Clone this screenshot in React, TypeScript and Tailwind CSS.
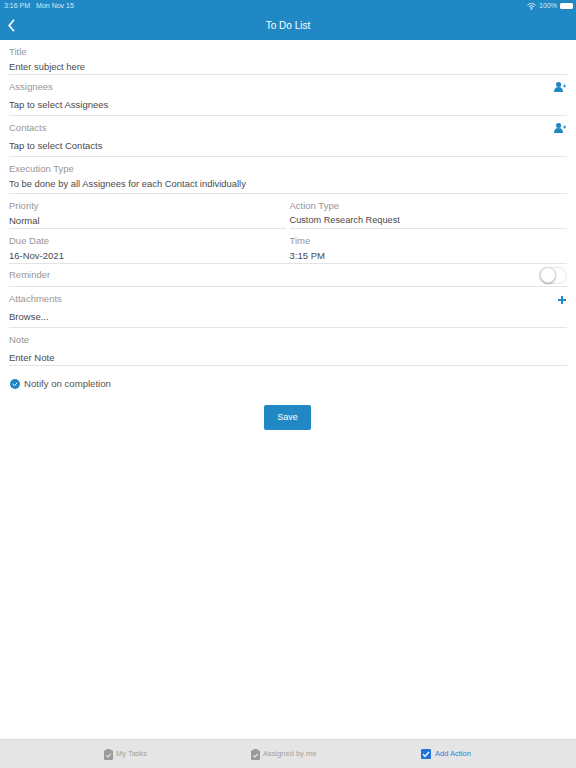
import React from "react";

const FONT = "font-['Liberation_Sans',sans-serif]";

function AddPerson() {
  return (
    <svg width="12" height="10" viewBox="0 0 12 10" fill="#2088c4">
      <ellipse cx="4.6" cy="2.5" rx="2.6" ry="2.5" />
      <path d="M0 10 C0 6.6 1.8 5 4.6 5 C7.4 5 9 6.6 9 10 Z" />
      <path d="M9.2 3.4h1V2.4h1v1h.8v1h-.8v1h-1v-1h-1z" />
    </svg>
  );
}

function Clipboard({ color }: { color: string }) {
  return (
    <svg width="9" height="11" viewBox="0 0 9 11">
      <rect x="0" y="1.2" width="9" height="9.8" rx="1" fill={color} />
      <rect x="2.5" y="0" width="4" height="2.4" rx="0.6" fill={color} />
      <path d="M2.3 6.4l1.6 1.6 3-3" stroke="#e5e5e5" strokeWidth="1.1" fill="none" />
    </svg>
  );
}

function Field({
  label,
  value,
  h,
  icon,
  gap,
  size = "text-[9.5px]",
}: {
  label: string;
  value: string;
  h: string;
  icon?: React.ReactNode;
  gap: string;
  size?: string;
}) {
  return (
    <div className={`${h} flex flex-col border-b border-[#e4e4e4] pt-[5px]`}>
      <div className="flex items-center justify-between pr-[1px] h-[13px]">
        <span className="text-[9.5px] leading-[13px] text-[#969696]">{label}</span>
        {icon}
      </div>
      <span className={`${gap} ${size} leading-[13px] text-[#4a4a4a]`}>{value}</span>
    </div>
  );
}

export default function App() {
  return (
    <div className={`${FONT} w-[576px] h-[768px] bg-white flex flex-col overflow-hidden`}>
      <div className="h-[40px] bg-[#2088c4] flex flex-col shrink-0 text-white">
        <div className="h-[12px] flex items-center justify-between pl-[4px] pr-[3px] text-[7px] text-[#d7ebf6]">
          <div className="flex gap-[6px]">
            <span>3:16 PM</span>
            <span>Mon Nov 15</span>
          </div>
          <div className="flex items-center gap-[3px]">
            <svg width="9" height="7" viewBox="0 0 9 7" fill="none" stroke="#e8f3fa" strokeWidth="1">
              <path d="M0.4 2.3C2.7 0 6.3 0 8.6 2.3" />
              <path d="M1.9 3.8C3.3 2.5 5.7 2.5 7.1 3.8" />
              <path d="M3.3 5.2C4 4.6 5 4.6 5.7 5.2" />
              <circle cx="4.5" cy="6.2" r="0.4" />
            </svg>
            <span>100%</span>
            <div className="w-[13px] h-[6px] rounded-[1.5px] bg-white" />
          </div>
        </div>
        <div className="relative flex-1 flex items-center justify-center">
          <svg className="absolute left-[8px] top-[7px]" width="7" height="13" viewBox="0 0 7 13" fill="none">
            <path d="M6 0.8L1.2 6.5L6 12.2" stroke="white" strokeWidth="1.7" />
          </svg>
          <span className="text-[10px] font-normal -mt-[2px]">To Do List</span>
        </div>
      </div>

      <div className="flex flex-col mx-[9px] w-[558px]">
        <Field label="Title" value="Enter subject here" h="h-[35px]" gap="mt-[2px]" size="text-[9.4px]" />
        <Field label="Assignees" value="Tap to select Assignees" h="h-[41px]" gap="mt-[5px]" icon={<AddPerson />} />
        <Field label="Contacts" value="Tap to select Contacts" h="h-[41px]" gap="mt-[5px]" icon={<AddPerson />} />
        <Field
          label="Execution Type"
          value="To be done by all Assignees for each Contact individually"
          h="h-[37px]"
          gap="mt-[2px]"
          size="text-[9.42px]"
        />
        <div className="grid grid-cols-[277px_277.5px] gap-x-[3.5px]">
          <Field label="Priority" value="Normal" h="h-[35px]" gap="mt-[2px]" />
          <Field label="Action Type" value="Custom Research Request" h="h-[35px]" gap="mt-[2px]" size="text-[9.2px]" />
        </div>
        <div className="grid grid-cols-[277px_281px] h-[35px] border-b border-[#e4e4e4]">
          <div className="pt-[5px] flex flex-col">
            <span className="text-[9.5px] leading-[13px] text-[#969696]">Due Date</span>
            <span className="mt-[2px] text-[9.5px] leading-[13px] text-[#4a4a4a]">16-Nov-2021</span>
          </div>
          <div className="pl-[3.5px] pt-[5px] flex flex-col">
            <span className="text-[9.5px] leading-[13px] text-[#969696]">Time</span>
            <span className="mt-[2px] text-[9.5px] leading-[13px] text-[#4a4a4a]">3:15 PM</span>
          </div>
        </div>
        <div className="h-[23px] flex items-center justify-between border-b border-[#e4e4e4]">
          <span className="text-[9.5px] text-[#969696]">Reminder</span>
          <div className="w-[28px] h-[17px] rounded-full border border-[#e6e6e6] bg-white flex items-center">
            <div className="w-[16px] h-[16px] rounded-full bg-white border border-[#ddd] shadow-[0_1px_2px_rgba(0,0,0,0.3)]" />
          </div>
        </div>
        <Field
          label="Attachments"
          value="Browse..."
          h="h-[41px]"
          gap="mt-[5px]"
          icon={
            <svg className="mt-[3px]" width="8" height="8" viewBox="0 0 8 8" fill="#2088c4">
              <path d="M3 0h2v3h3v2H5v3H3V5H0V3h3z" />
            </svg>
          }
        />
        <Field label="Note" value="Enter Note" h="h-[38px]" gap="mt-[5px]" />
        <div className="flex items-center gap-[4px] mt-[12px] h-[12px]">
          <svg className="ml-[1px]" width="10" height="10" viewBox="0 0 10 10">
            <circle cx="5" cy="5" r="5" fill="#2088c4" />
            <path d="M2.8 5.1l1.6 1.5 2.8-2.8" stroke="white" strokeWidth="1" fill="none" />
          </svg>
          <span className="text-[9.6px] text-[#555]">Notify on completion</span>
        </div>
        <div className="flex justify-center mt-[15px] pr-[1px]">
          <button className="w-[47px] h-[25px] pt-[1px] bg-[#2088c4] rounded-[2px] text-white text-[9px]">Save</button>
        </div>
      </div>

      <div className="mt-auto h-[29px] bg-[#e5e5e5] border-t border-[#dcdcdc] grid grid-cols-[104px_142px_163px] pl-[104px] items-center">
        <div className="flex items-center gap-[3px] text-[7.5px] text-[#a2a2a2]">
          <Clipboard color="#9a9a9a" />
          <span>My Tasks</span>
        </div>
        <div className="flex items-center gap-[3px] text-[7.5px] text-[#a2a2a2] pl-[43px]">
          <Clipboard color="#9a9a9a" />
          <span>Assigned by me</span>
        </div>
        <div className="flex items-center gap-[4px] text-[7.5px] text-[#2f7fd6] pl-[71px]">
          <svg width="10" height="10" viewBox="0 0 10 10" className="shrink-0">
            <rect width="10" height="10" rx="1" fill="#2275d8" />
            <path d="M2 5.2l2 2 4-4.2" stroke="white" strokeWidth="1.3" fill="none" />
          </svg>
          <span className="whitespace-nowrap">Add Action</span>
        </div>
      </div>
    </div>
  );
}
